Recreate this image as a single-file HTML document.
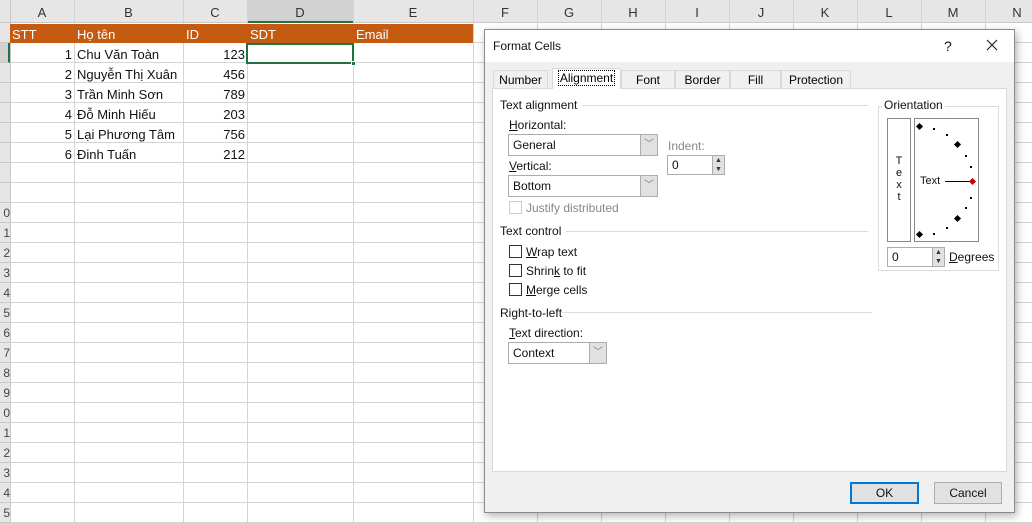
<!DOCTYPE html>
<html><head><style>
*{margin:0;padding:0;box-sizing:border-box}
body{width:1032px;height:523px;overflow:hidden;background:#fff;font-family:"Liberation Sans",sans-serif;position:relative;font-size:13px}
.a{position:absolute}
.vl{position:absolute;top:0;width:1px;height:523px;background:#d4d4d4}
.ch{position:absolute;top:0;height:23px;line-height:26px;text-align:center;color:#333;font-size:13px}
.rh{position:absolute;left:0;width:10px;height:20px;background:#e6e6e6;border-bottom:1px solid #c8c8c8;color:#444;font-size:12px;line-height:20px;text-align:right;overflow:hidden}
.cell{position:absolute;height:20px;line-height:21px;font-size:13px;color:#111;white-space:nowrap}
.dlg{font-size:12px;color:#111}
.u{text-decoration:underline}
.sel{position:absolute;background:#fff;border:1px solid #acacac;height:22px;line-height:20px;padding-left:4px;font-size:12px}
.sel .btn{position:absolute;right:0;top:0;width:17px;height:20px;background:#e1e1e1;border-left:1px solid #acacac;text-align:center;color:#777;font-size:10px;line-height:20px}
.cb{position:absolute;width:13px;height:13px;border:1px solid #333;background:#fff}
.grp{position:absolute;height:1px;background:#dcdcdc}
.tab{position:absolute;top:70px;height:19px;line-height:19px;text-align:center;font-size:12px;border:1px solid #d9d9d9;border-bottom:none;background:#f0f0f0}
.dot{position:absolute;width:2px;height:2px;background:#000}
.dia{position:absolute;width:5px;height:5px;background:#000;transform:rotate(45deg)}
</style></head><body>
<div class="a" style="left:10px;top:23px;width:1022px;height:500px;background:repeating-linear-gradient(to bottom,#fff 0,#fff 19px,#d4d4d4 19px,#d4d4d4 20px)"></div>
<div class="a" style="left:0;top:0;width:1032px;height:23px;background:#e6e6e6;border-bottom:1px solid #c8c8c8"></div>
<div class="a" style="left:247px;top:0;width:106px;height:23px;background:#d2d2d2;border-bottom:2px solid #217346"></div>
<div class="vl" style="left:10px;background:#c8c8c8"></div>
<div class="vl" style="left:74px"></div><div class="vl" style="left:183px"></div><div class="vl" style="left:247px"></div><div class="vl" style="left:353px"></div><div class="vl" style="left:473px"></div><div class="vl" style="left:537px"></div><div class="vl" style="left:601px"></div><div class="vl" style="left:665px"></div><div class="vl" style="left:729px"></div><div class="vl" style="left:793px"></div><div class="vl" style="left:857px"></div><div class="vl" style="left:921px"></div><div class="vl" style="left:985px"></div>
<div class="ch" style="left:10px;width:64px">A</div><div class="ch" style="left:74px;width:109px">B</div><div class="ch" style="left:183px;width:64px">C</div><div class="ch" style="left:247px;width:106px">D</div><div class="ch" style="left:353px;width:120px">E</div><div class="ch" style="left:473px;width:64px">F</div><div class="ch" style="left:537px;width:64px">G</div><div class="ch" style="left:601px;width:64px">H</div><div class="ch" style="left:665px;width:64px">I</div><div class="ch" style="left:729px;width:64px">J</div><div class="ch" style="left:793px;width:64px">K</div><div class="ch" style="left:857px;width:64px">L</div><div class="ch" style="left:921px;width:64px">M</div><div class="ch" style="left:985px;width:64px">N</div>
<div class="rh" style="top:23px"></div>
<div class="rh" style="top:43px;background:#d2d2d2;border-right:2px solid #217346"></div>
<div class="rh" style="top:63px"></div><div class="rh" style="top:83px"></div><div class="rh" style="top:103px"></div><div class="rh" style="top:123px"></div><div class="rh" style="top:143px"></div><div class="rh" style="top:163px"></div><div class="rh" style="top:183px"></div>
<div class="rh" style="top:203px">0</div><div class="rh" style="top:223px">1</div><div class="rh" style="top:243px">2</div><div class="rh" style="top:263px">3</div><div class="rh" style="top:283px">4</div><div class="rh" style="top:303px">5</div><div class="rh" style="top:323px">6</div><div class="rh" style="top:343px">7</div><div class="rh" style="top:363px">8</div><div class="rh" style="top:383px">9</div><div class="rh" style="top:403px">0</div><div class="rh" style="top:423px">1</div><div class="rh" style="top:443px">2</div><div class="rh" style="top:463px">3</div><div class="rh" style="top:483px">4</div><div class="rh" style="top:503px">5</div>
<div class="a" style="left:10px;top:24px;width:463px;height:19px;background:#c55a11"></div>
<div class="cell" style="left:12px;top:24px;color:#fff">STT</div>
<div class="cell" style="left:77px;top:24px;color:#fff">Họ tên</div>
<div class="cell" style="left:186px;top:24px;color:#fff">ID</div>
<div class="cell" style="left:250px;top:24px;color:#fff">SDT</div>
<div class="cell" style="left:356px;top:24px;color:#fff">Email</div>
<div class="a" style="left:246px;top:43px;width:108px;height:21px;border:2px solid #217346"></div>
<div class="a" style="left:351px;top:61px;width:5px;height:5px;background:#217346;border:1px solid #fff"></div>
<div class="cell" style="left:10px;width:62px;text-align:right;top:44px">1</div><div class="cell" style="left:77px;top:44px">Chu Văn Toàn</div><div class="cell" style="left:183px;width:62px;text-align:right;top:44px">123</div>
<div class="cell" style="left:10px;width:62px;text-align:right;top:64px">2</div><div class="cell" style="left:77px;top:64px">Nguyễn Thị Xuân</div><div class="cell" style="left:183px;width:62px;text-align:right;top:64px">456</div>
<div class="cell" style="left:10px;width:62px;text-align:right;top:84px">3</div><div class="cell" style="left:77px;top:84px">Trần Minh Sơn</div><div class="cell" style="left:183px;width:62px;text-align:right;top:84px">789</div>
<div class="cell" style="left:10px;width:62px;text-align:right;top:104px">4</div><div class="cell" style="left:77px;top:104px">Đỗ Minh Hiếu</div><div class="cell" style="left:183px;width:62px;text-align:right;top:104px">203</div>
<div class="cell" style="left:10px;width:62px;text-align:right;top:124px">5</div><div class="cell" style="left:77px;top:124px">Lại Phương Tâm</div><div class="cell" style="left:183px;width:62px;text-align:right;top:124px">756</div>
<div class="cell" style="left:10px;width:62px;text-align:right;top:144px">6</div><div class="cell" style="left:77px;top:144px">Đinh Tuấn</div><div class="cell" style="left:183px;width:62px;text-align:right;top:144px">212</div>

<div class="a dlg" style="left:484px;top:29px;width:531px;height:484px;background:#f0f0f0;border:1px solid #8a8a8a;box-shadow:2px 3px 8px rgba(0,0,0,.3)">
<div class="a" style="left:0;top:0;width:529px;height:32px;background:#fff"></div>
<div class="a" style="left:8px;top:9px;font-size:12px">Format Cells</div>
<div class="a" style="left:459px;top:8px;font-size:14px">?</div>
<svg class="a" style="left:501px;top:9px" width="12" height="12"><path d="M1 1L11 11M11 1L1 11" stroke="#222" stroke-width="1.2"/></svg>
</div>
<div class="tab" style="left:493px;width:55px">Number</div>
<div class="tab" style="left:552px;width:69px;top:68px;height:21px;background:#fff;z-index:2"><span style="border:1px dotted #000;padding:0 1px">Alignment</span></div>
<div class="tab" style="left:621px;width:54px">Font</div>
<div class="tab" style="left:675px;width:55px">Border</div>
<div class="tab" style="left:730px;width:51px">Fill</div>
<div class="tab" style="left:781px;width:70px">Protection</div>
<div class="a" style="left:492px;top:88px;width:515px;height:384px;background:#fff;border:1px solid #d9d9d9"></div>
<div class="dlg">
<div class="a" style="left:500px;top:98px">Text alignment</div><div class="grp" style="left:582px;top:105px;width:286px"></div>
<div class="a" style="left:509px;top:118px"><span class="u">H</span>orizontal:</div>
<div class="sel" style="left:508px;top:134px;width:150px">General<div class="btn">﹀</div></div>
<div class="a" style="left:668px;top:139px;color:#888">Indent:</div>
<div class="sel" style="left:667px;top:155px;width:58px;height:20px;line-height:18px">0<div class="btn" style="width:12px;height:18px;line-height:9px;font-size:7px;color:#333">▲<br>▼</div></div>
<div class="a" style="left:509px;top:159px"><span class="u">V</span>ertical:</div>
<div class="sel" style="left:508px;top:175px;width:150px">Bottom<div class="btn">﹀</div></div>
<div class="cb" style="left:509px;top:201px;border-color:#ccc"></div><div class="a" style="left:526px;top:201px;color:#888">Justify distributed</div>
<div class="a" style="left:500px;top:224px">Text control</div><div class="grp" style="left:566px;top:231px;width:302px"></div>
<div class="cb" style="left:509px;top:245px"></div><div class="a" style="left:526px;top:245px"><span class="u">W</span>rap text</div>
<div class="cb" style="left:509px;top:264px"></div><div class="a" style="left:526px;top:264px">Shrin<span class="u">k</span> to fit</div>
<div class="cb" style="left:509px;top:283px"></div><div class="a" style="left:526px;top:283px"><span class="u">M</span>erge cells</div>
<div class="a" style="left:500px;top:306px">Right-to-left</div><div class="grp" style="left:562px;top:312px;width:310px"></div>
<div class="a" style="left:509px;top:326px"><span class="u">T</span>ext direction:</div>
<div class="sel" style="left:508px;top:342px;width:99px">Context<div class="btn">﹀</div></div>
<div class="a" style="left:878px;top:106px;width:121px;height:165px;border:1px solid #dcdcdc"></div>
<div class="a" style="left:882px;top:98px;background:#fff;padding:0 2px">Orientation</div>
<div class="a" style="left:887px;top:118px;width:24px;height:124px;border:1px solid #888;text-align:center;font-size:11px;line-height:12px;padding-top:36px">T<br>e<br>x<br>t</div>
<div class="a" style="left:914px;top:118px;width:65px;height:124px;border:1px solid #888"></div>
<div class="a" style="left:920px;top:175px;font-size:11px">Text</div>
<div class="a" style="left:945px;top:181px;width:25px;height:1px;background:#000"></div>
<div class="dia" style="left:970px;top:179px;background:#c00"></div>
<div class="dia" style="left:917px;top:124px"></div><div class="dia" style="left:955px;top:142px"></div><div class="dia" style="left:955px;top:216px"></div><div class="dia" style="left:917px;top:232px"></div>
<div class="dot" style="left:933px;top:128px"></div><div class="dot" style="left:946px;top:134px"></div><div class="dot" style="left:965px;top:155px"></div><div class="dot" style="left:970px;top:166px"></div><div class="dot" style="left:970px;top:197px"></div><div class="dot" style="left:965px;top:207px"></div><div class="dot" style="left:946px;top:227px"></div><div class="dot" style="left:933px;top:233px"></div>
<div class="sel" style="left:887px;top:247px;width:58px;height:20px;line-height:18px">0<div class="btn" style="width:12px;height:18px;line-height:9px;font-size:7px;color:#333">▲<br>▼</div></div>
<div class="a" style="left:949px;top:250px"><span class="u">D</span>egrees</div>
<div class="a" style="left:850px;top:482px;width:69px;height:22px;border:2px solid #0078d7;background:#e1e1e1;text-align:center;line-height:18px">OK</div>
<div class="a" style="left:934px;top:482px;width:68px;height:22px;border:1px solid #adadad;background:#e1e1e1;text-align:center;line-height:20px">Cancel</div>
</div>
</body></html>
